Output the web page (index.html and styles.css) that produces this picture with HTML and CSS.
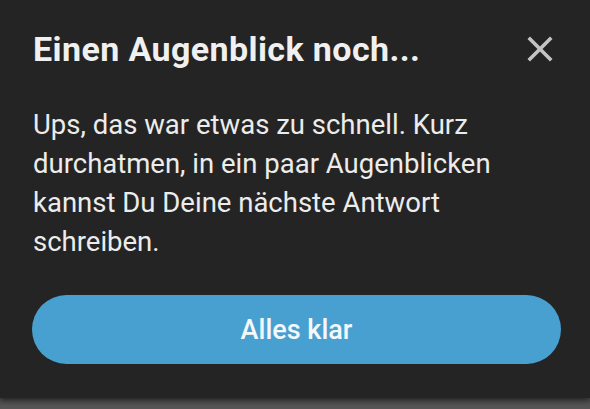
FILE: index.html
```html
<!DOCTYPE html>
<html lang="de">
<head>
<meta charset="utf-8">
<link rel="stylesheet" href="styles.css">
</head>
<body>
<div class="dialog">
  <div class="header">
    <h1 class="title">Einen Augenblick noch...</h1>
    <button class="close" aria-label="Schließen">
      <svg width="26" height="26" viewBox="0 0 26 26"><path d="M3 3 L23 23 M23 3 L3 23" stroke="#c4c4c4" stroke-width="3.6" stroke-linecap="square" fill="none"/></svg>
    </button>
  </div>
  <p class="message">Ups, das war etwas zu schnell. Kurz durchatmen, in ein paar Augenblicken kannst Du Deine nächste Antwort schreiben.</p>
  <button class="confirm">Alles klar</button>
</div>
<div class="backdrop"></div>
</body>
</html>
```
FILE: styles.css
```css
html, body {
  margin: 0;
  padding: 0;
}
body {
  width: 590px;
  height: 409px;
  overflow: hidden;
  background: #242424;
  font-family: Roboto, "Noto Sans", sans-serif;
  display: flex;
  flex-direction: column;
}
.dialog {
  height: 398px;
  box-sizing: border-box;
  padding: 28px 29px 0 33px;
  background: #242424;
  display: flex;
  flex-direction: column;
  box-shadow: 0 2px 6px rgba(0,0,0,0.6);
  position: relative;
  z-index: 1;
}
.header {
  display: flex;
  align-items: center;
  justify-content: space-between;
}
.title {
  margin: 0;
  font-size: 34px;
  letter-spacing: 0.4px;
  line-height: 42px;
  font-weight: 700;
  color: #f0f0f0;
}
.close {
  background: none;
  border: 0;
  padding: 0;
  margin-right: 8px;
  width: 26px;
  height: 26px;
  display: flex;
}
.message {
  margin: 35px 0 0 0;
  font-size: 27.5px;
  line-height: 39px;
  color: #ececec;
  font-weight: 400;
}
.confirm {
  margin: 34px 0 0 -1px;
  width: 529px;
  height: 69px;
  border: 0;
  border-radius: 35px;
  background: #48a0d0;
  color: #f4f8fa;
  font-family: Roboto, "Noto Sans", sans-serif;
  font-size: 27px;
  font-weight: 500;
}
.backdrop {
  flex: 1;
  background: linear-gradient(#4c4c4c, #575757);
}
```
